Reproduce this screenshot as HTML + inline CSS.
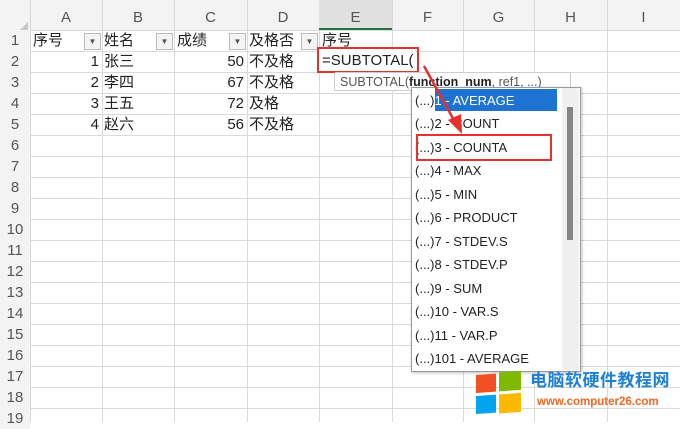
<!DOCTYPE html><html><head><style>
body{margin:0;width:680px;height:422px;overflow:hidden;background:#fff;font-family:"Liberation Sans","Noto Sans CJK SC",sans-serif;position:relative}
.a{position:absolute}
.hd{color:#555;font-size:15px;text-align:center;line-height:20px;top:8px!important}
.rh{background:#f3f3f3;color:#555;font-size:15px;text-align:center;width:30px;height:21px;line-height:21px}
.c{font-size:15px;line-height:21px;color:#222;height:21px}
.it{font-size:13px;color:#222;left:415px;line-height:20px}
</style></head><body>
<div class="a" style="left:0;top:0;width:680px;height:30px;background:#f3f3f3"></div>
<div class="a" style="left:0;top:0;width:30px;height:422px;background:#f3f3f3"></div>
<svg class="a" style="left:0;top:0" width="680" height="422">
<g stroke="#dadada" stroke-width="1">
<line x1="30" y1="51.5" x2="680" y2="51.5"/><line x1="30" y1="72.5" x2="680" y2="72.5"/><line x1="30" y1="93.5" x2="680" y2="93.5"/><line x1="30" y1="114.5" x2="680" y2="114.5"/><line x1="30" y1="135.5" x2="680" y2="135.5"/><line x1="30" y1="156.5" x2="680" y2="156.5"/><line x1="30" y1="177.5" x2="680" y2="177.5"/><line x1="30" y1="198.5" x2="680" y2="198.5"/><line x1="30" y1="219.5" x2="680" y2="219.5"/><line x1="30" y1="240.5" x2="680" y2="240.5"/><line x1="30" y1="261.5" x2="680" y2="261.5"/><line x1="30" y1="282.5" x2="680" y2="282.5"/><line x1="30" y1="303.5" x2="680" y2="303.5"/><line x1="30" y1="324.5" x2="680" y2="324.5"/><line x1="30" y1="345.5" x2="680" y2="345.5"/><line x1="30" y1="366.5" x2="680" y2="366.5"/><line x1="30" y1="387.5" x2="680" y2="387.5"/><line x1="30" y1="408.5" x2="680" y2="408.5"/>
<line x1="102.5" y1="0" x2="102.5" y2="422"/><line x1="174.5" y1="0" x2="174.5" y2="422"/><line x1="247.5" y1="0" x2="247.5" y2="422"/><line x1="319.5" y1="0" x2="319.5" y2="422"/><line x1="392.5" y1="0" x2="392.5" y2="422"/><line x1="463.5" y1="0" x2="463.5" y2="422"/><line x1="534.5" y1="0" x2="534.5" y2="422"/><line x1="607.5" y1="0" x2="607.5" y2="422"/><line x1="30.5" y1="0" x2="30.5" y2="422"/>
<line x1="0" y1="30.5" x2="680" y2="30.5"/>
</g>
<rect x="319" y="0" width="73" height="30" fill="#e1e1e1"/><line x1="319" y1="29" x2="392" y2="29" stroke="#217346" stroke-width="2"/>
<rect x="0" y="51" width="30" height="21" fill="#e1e1e1"/><line x1="29" y1="51" x2="29" y2="72" stroke="#217346" stroke-width="2"/>
<polygon points="20,30 28,30 28,22" fill="#c8c8c8"/>
</svg>
<div class="a hd" style="left:30px;width:72px">A</div><div class="a hd" style="left:102px;width:72px">B</div><div class="a hd" style="left:174px;width:73px">C</div><div class="a hd" style="left:247px;width:72px">D</div><div class="a hd" style="left:319px;width:73px">E</div><div class="a hd" style="left:392px;width:71px">F</div><div class="a hd" style="left:463px;width:71px">G</div><div class="a hd" style="left:534px;width:73px">H</div><div class="a hd" style="left:607px;width:73px">I</div>
<div class="a" style="left:0;top:30px">
<div class="rh">1</div><div class="rh">2</div><div class="rh">3</div><div class="rh">4</div><div class="rh">5</div><div class="rh">6</div><div class="rh">7</div><div class="rh">8</div><div class="rh">9</div><div class="rh">10</div><div class="rh">11</div><div class="rh">12</div><div class="rh">13</div><div class="rh">14</div><div class="rh">15</div><div class="rh">16</div><div class="rh">17</div><div class="rh">18</div><div class="rh">19</div></div>
<div class="a c" style="left:33px;top:30px">序号</div><div class="a c" style="left:104px;top:30px">姓名</div><div class="a c" style="left:177px;top:30px">成绩</div><div class="a c" style="left:249px;top:30px">及格否</div><div class="a c" style="left:322px;top:30px">序号</div>
<div class="a" style="left:84px;top:33px;width:15px;height:15px;border:1px solid #bbb;background:#f4f4f4;font-size:8px;text-align:center;line-height:15px;color:#555">▼</div>
<div class="a" style="left:156px;top:33px;width:15px;height:15px;border:1px solid #bbb;background:#f4f4f4;font-size:8px;text-align:center;line-height:15px;color:#555">▼</div>
<div class="a" style="left:229px;top:33px;width:15px;height:15px;border:1px solid #bbb;background:#f4f4f4;font-size:8px;text-align:center;line-height:15px;color:#555">▼</div>
<div class="a" style="left:301px;top:33px;width:15px;height:15px;border:1px solid #bbb;background:#f4f4f4;font-size:8px;text-align:center;line-height:15px;color:#555">▼</div>
<div class="a c" style="left:30px;top:51px;width:69px;text-align:right">1</div><div class="a c" style="left:104px;top:51px">张三</div><div class="a c" style="left:174px;top:51px;width:70px;text-align:right">50</div><div class="a c" style="left:249px;top:51px">不及格</div>
<div class="a c" style="left:30px;top:72px;width:69px;text-align:right">2</div><div class="a c" style="left:104px;top:72px">李四</div><div class="a c" style="left:174px;top:72px;width:70px;text-align:right">67</div><div class="a c" style="left:249px;top:72px">不及格</div>
<div class="a c" style="left:30px;top:93px;width:69px;text-align:right">3</div><div class="a c" style="left:104px;top:93px">王五</div><div class="a c" style="left:174px;top:93px;width:70px;text-align:right">72</div><div class="a c" style="left:249px;top:93px">及格</div>
<div class="a c" style="left:30px;top:114px;width:69px;text-align:right">4</div><div class="a c" style="left:104px;top:114px">赵六</div><div class="a c" style="left:174px;top:114px;width:70px;text-align:right">56</div><div class="a c" style="left:249px;top:114px">不及格</div>
<div class="a" style="left:319px;top:50px;width:96px;height:21px;background:#fff"></div>
<div class="a c" style="left:322px;top:50px">=SUBTOTAL(</div>
<div class="a" style="left:317px;top:47px;width:98px;height:22px;border:2px solid #e8312f"></div>
<div class="a" style="left:334px;top:72px;width:237px;height:19px;border:1px solid #ccc;background:#fff;border-radius:2px;font-size:12.5px;color:#555;line-height:19px;padding-left:5px;box-sizing:border-box;white-space:nowrap;overflow:hidden">SUBTOTAL(<b style="color:#222">function_num</b>, ref1, ...)</div>
<div class="a" style="left:411px;top:87px;width:168px;height:283px;border:1px solid #999;background:#fff;box-shadow:1px 1px 3px rgba(0,0,0,.25)"></div>
<div class="a" style="left:562px;top:88px;width:17px;height:282px;background:#f0f0f0"></div>
<div class="a" style="left:567px;top:107px;width:6px;height:133px;background:#858585"></div>
<div class="a" style="left:435px;top:89px;width:122px;height:22px;background:#1e73d2"></div>
<div class="a it" style="top:91px;"><span>(...)</span><span style="color:#fff">1 - AVERAGE</span></div>
<div class="a it" style="top:114px">(...)2 - COUNT</div>
<div class="a it" style="top:138px">(...)3 - COUNTA</div>
<div class="a it" style="top:161px">(...)4 - MAX</div>
<div class="a it" style="top:185px">(...)5 - MIN</div>
<div class="a it" style="top:208px">(...)6 - PRODUCT</div>
<div class="a it" style="top:232px">(...)7 - STDEV.S</div>
<div class="a it" style="top:255px">(...)8 - STDEV.P</div>
<div class="a it" style="top:279px">(...)9 - SUM</div>
<div class="a it" style="top:302px">(...)10 - VAR.S</div>
<div class="a it" style="top:326px">(...)11 - VAR.P</div>
<div class="a it" style="top:349px">(...)101 - AVERAGE</div>
<div class="a" style="left:416px;top:134px;width:132px;height:23px;border:2px solid #e8312f"></div>
<svg class="a" style="left:0;top:0" width="680" height="422"><line x1="424" y1="66" x2="455" y2="122" stroke="#e8312f" stroke-width="2.5"/><polygon points="448,120 462,134 461,114" fill="#e8312f"/>
<g transform="translate(476,372) skewY(-4)"><rect x="0" y="3" width="20" height="18" fill="#f25022"/><rect x="23" y="2" width="22" height="19" fill="#7fba00"/><rect x="0" y="24" width="20" height="18" fill="#00a4ef"/><rect x="23" y="24" width="22" height="19" fill="#ffb900"/></g></svg>
<div class="a" style="left:530px;top:370px;font-size:17px;font-weight:bold;color:#1d7fd6;letter-spacing:0.5px;line-height:22px">电脑软硬件教程网</div>
<div class="a" style="left:537px;top:395px;font-size:11.5px;font-weight:bold;color:#f26522;line-height:14px">www.computer26.com</div>
</body></html>
